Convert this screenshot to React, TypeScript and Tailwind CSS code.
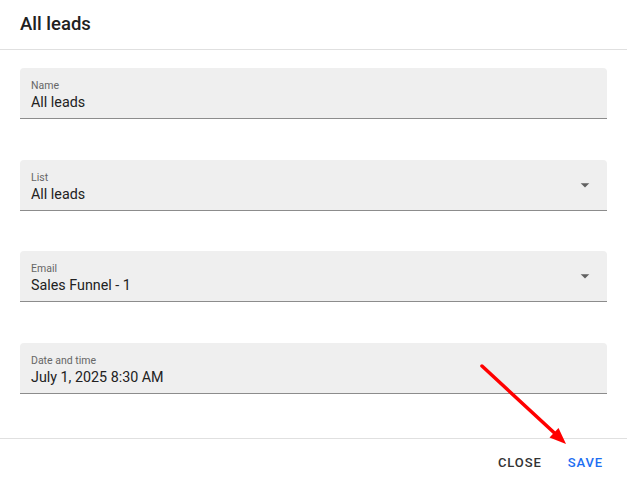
import React from "react";

function Field({ label, value, select }: { label: string; value: string; select?: boolean }) {
  return (
    <div className="relative h-[51px] rounded-t-[4px] bg-[#efefef] border-b border-[#8c8c8c] px-[11px] pt-[11px]">
      <div className="text-[10.5px] leading-[13px] text-[#666666]">{label}</div>
      <div className="text-[14.3px] leading-[20px] text-[#222222]">{value}</div>
      {select && (
        <svg className="absolute right-[16px] top-[17px]" width="12" height="16" viewBox="5 4 14 16">
          <path d="M7 10l5 5 5-5z" fill="#616161" />
        </svg>
      )}
    </div>
  );
}

export default function App() {
  return (
    <div
      className="relative w-[627px] h-[486px] bg-white overflow-hidden"
      style={{ fontFamily: "Roboto, 'Liberation Sans', sans-serif" }}
    >
      <div className="h-[50px] border-b border-[#e0e0e0] px-5 flex items-center">
        <h1 className="text-[18.5px] font-medium text-[#212121]">All leads</h1>
      </div>
      <div className="px-5 pt-[18px] pb-[44px] flex flex-col gap-[40.67px]">
        <Field label="Name" value="All leads" />
        <Field label="List" value="All leads" select />
        <Field label="Email" value="Sales Funnel - 1" select />
        <Field label="Date and time" value="July 1, 2025 8:30 AM" />
      </div>
      <div className="h-[48px] border-t border-[#e0e0e0] flex items-center justify-end gap-[26px] pr-[24px]">
        <span className="text-[13px] font-medium tracking-[0.9px] text-[#333333]">CLOSE</span>
        <span className="text-[13px] font-medium tracking-[0.9px] text-[#1c6ef2]">SAVE</span>
      </div>
      <svg className="absolute left-0 top-0 pointer-events-none" width="627" height="486">
        <line x1="482" y1="366" x2="555" y2="433.5" stroke="#ff0000" strokeWidth="3.5" strokeLinecap="round" />
        <polygon points="566,444 549.5,437.5 558.5,428" fill="#ff0000" />
      </svg>
    </div>
  );
}
